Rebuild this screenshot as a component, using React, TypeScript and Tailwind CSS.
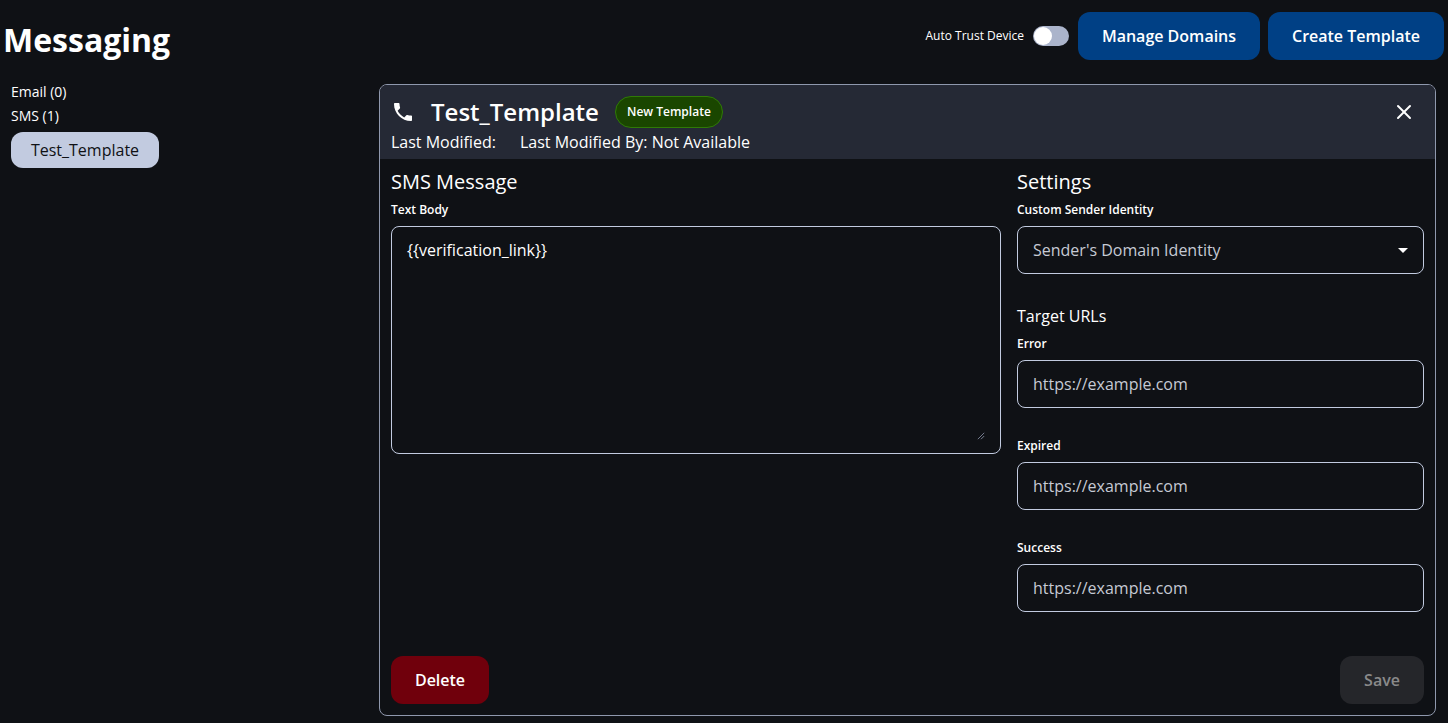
import { X } from 'lucide-react';

function FieldLabel({ children }: { children: string }) {
  return <label className="block text-xs font-semibold leading-4 text-white">{children}</label>;
}

function UrlField({ label, className }: { label: string; className?: string }) {
  return (
    <div className={className}>
      <FieldLabel>{label}</FieldLabel>
      <div className="mt-2 flex h-12 items-center rounded-lg border border-[#c2cbe0] px-[15px] text-base text-[#c6cad4]">
        https://example.com
      </div>
    </div>
  );
}

export default function App() {
  return (
    <div className="h-[723px] overflow-hidden bg-[#0f1115] font-['Open_Sans',sans-serif] text-white">
      <header className="flex h-[84px] items-start justify-between pl-[3px] pr-1">
        <h1 className="mt-[18px] text-[32px] font-bold leading-[44px]">Messaging</h1>
        <div className="mt-3 flex items-center">
          <span className="text-xs">Auto Trust Device</span>
          <div className="ml-[9px] flex h-5 w-9 items-center rounded-full bg-[#abb4cb] pl-[1px]">
            <div className="h-[18px] w-[18px] rounded-full bg-white" />
          </div>
          <button type="button" className="ml-[9px] h-12 w-[182px] rounded-xl bg-[#004085] text-base font-semibold">
            Manage Domains
          </button>
          <button type="button" className="ml-2 h-12 w-[176px] rounded-xl bg-[#004085] text-base font-semibold">
            Create Template
          </button>
        </div>
      </header>

      <div className="flex items-start">
        <aside className="w-[379px] pl-[11px] -mt-1">
          <div className="text-sm font-medium leading-6">Email (0)</div>
          <div className="text-sm font-medium leading-6">SMS (1)</div>
          <button type="button" className="mt-1 h-9 w-[148px] rounded-xl bg-[#c2cbe0] text-base text-[#0f1115]">
            Test_Template
          </button>
        </aside>

        <main className="flex h-[632px] w-[1057px] flex-col overflow-hidden rounded-lg border border-[#8f98ad]">
          <div className="h-[74px] shrink-0 bg-[#252935] pl-[11px] pr-[19px]">
            <div className="flex h-[45px] items-center pt-[9px]">
              <svg viewBox="0 0 24 24" className="h-6 w-6 fill-white">
                <path d="M6.62 10.79c1.44 2.83 3.76 5.14 6.59 6.59l2.2-2.2c.27-.27.67-.36 1.02-.24 1.12.37 2.33.57 3.57.57.55 0 1 .45 1 1V20c0 .55-.45 1-1 1-9.39 0-17-7.61-17-17 0-.55.45-1 1-1h3.5c.55 0 1 .45 1 1 0 1.25.2 2.45.57 3.57.11.35.03.74-.25 1.02l-2.2 2.2z" />
              </svg>
              <span className="ml-[16px] text-2xl font-semibold leading-8">Test_Template</span>
              <span className="ml-4 flex h-8 w-[108px] items-center justify-center rounded-full border border-[#2f7a06] bg-[#1a4600] text-xs font-semibold">
                New Template
              </span>
              <X className="ml-auto h-6 w-6" strokeWidth={2} />
            </div>
            <div className="flex text-base leading-6">
              <span className="w-[129px]">Last Modified:</span>
              <span>Last Modified By: Not Available</span>
            </div>
          </div>

          <div className="flex min-h-0 flex-1 flex-col px-[11px] pb-[11px] pt-[9px]">
            <div className="flex flex-1 gap-4">
              <section className="w-[610px]">
                <h2 className="mb-[6px] text-xl leading-7">SMS Message</h2>
                <FieldLabel>Text Body</FieldLabel>
                <div className="relative mt-2 h-[228px] rounded-lg border border-[#c2cbe0] px-[15px] py-[11px] text-base leading-6">
                  {'{{verification_link}}'}
                  <svg viewBox="0 0 10 10" className="absolute bottom-[13px] right-[15px] h-2 w-2 stroke-[#8f98ad]">
                    <path d="M9 1 1 9M9 5 5 9" fill="none" strokeWidth="1" />
                  </svg>
                </div>
              </section>

              <section className="w-[407px]">
                <h2 className="mb-[6px] text-xl leading-7">Settings</h2>
                <FieldLabel>Custom Sender Identity</FieldLabel>
                <div className="mt-2 flex h-12 items-center justify-between rounded-lg border border-[#c2cbe0] pl-[15px] pr-[15px] text-base text-[#c6cad4]">
                  Sender's Domain Identity
                  <span className="h-0 w-0 border-x-[5px] border-t-[5px] border-x-transparent border-t-white" />
                </div>
                <h3 className="mt-[30px] text-base leading-6">Target URLs</h3>
                <UrlField label="Error" className="mt-2" />
                <UrlField label="Expired" className="mt-[30px]" />
                <UrlField label="Success" className="mt-[30px]" />
              </section>
            </div>

            <div className="flex justify-between">
              <button type="button" className="h-12 w-[98px] rounded-xl bg-[#70000c] text-base font-semibold">
                Delete
              </button>
              <button type="button" className="h-12 w-[84px] rounded-xl bg-[#25262a] text-base font-semibold text-[#8a8a8a]">
                Save
              </button>
            </div>
          </div>
        </main>
      </div>
    </div>
  );
}
